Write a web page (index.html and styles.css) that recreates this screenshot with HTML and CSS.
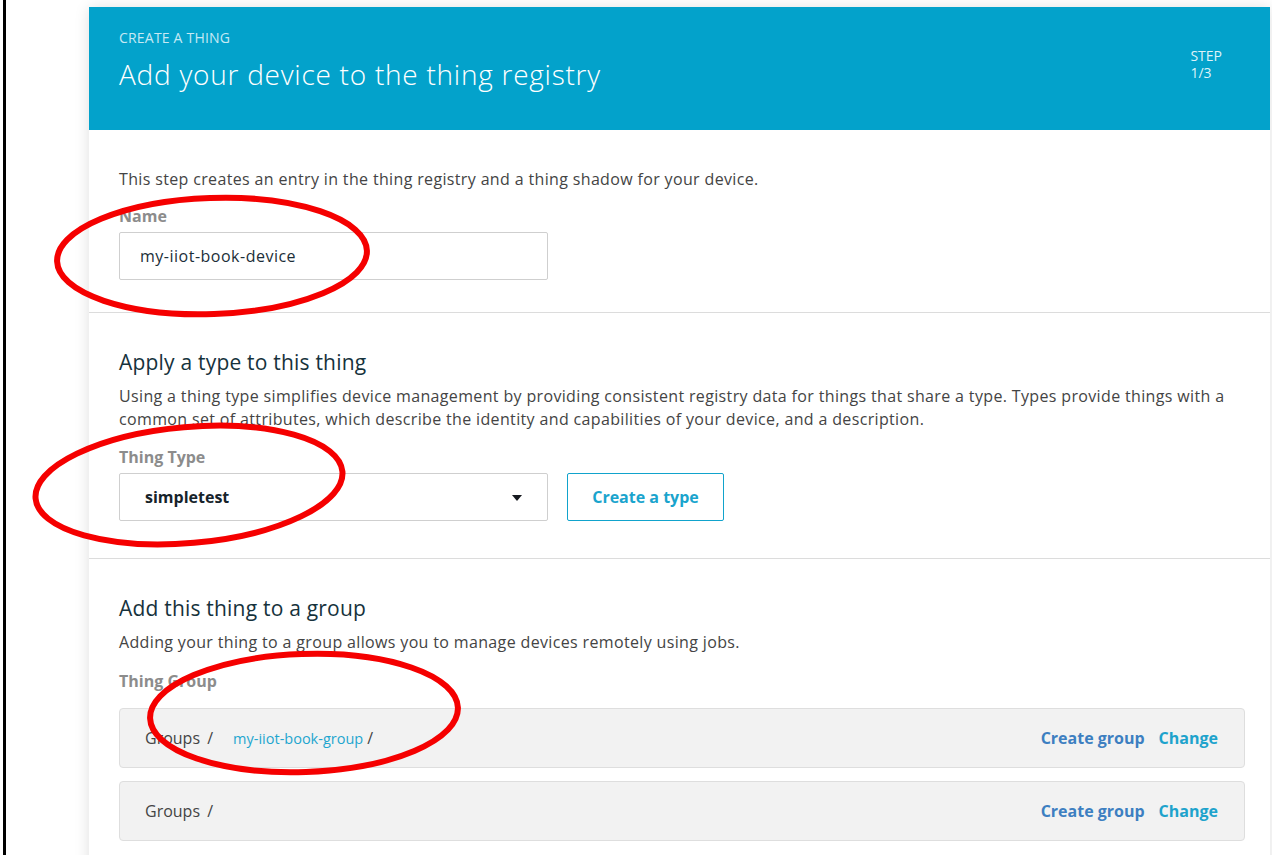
FILE: index.html
```html
<!DOCTYPE html>
<html>
<head>
<meta charset="utf-8">
<link rel="stylesheet" href="styles.css">
</head>
<body>
<div class="frame">
  <div class="card">
    <div class="hdr">
      <div class="hdr-main">
        <div class="eyebrow">CREATE A THING</div>
        <div class="title">Add your device to the thing registry</div>
      </div>
      <div class="step">STEP<br>1/3</div>
    </div>

    <div class="sec sec1">
      <p class="para">This step creates an entry in the thing registry and a thing shadow for your device.</p>
      <div class="label">Name</div>
      <div class="input">my-iiot-book-device</div>
    </div>

    <div class="sec sec2">
      <h2 class="h">Apply a type to this thing</h2>
      <p class="para">Using a thing type simplifies device management by providing consistent registry data for things that share a type. Types provide things with a common set of attributes, which describe the identity and capabilities of your device, and a description.</p>
      <div class="label">Thing Type</div>
      <div class="typerow">
        <div class="select">
          <span>simpletest</span>
          <svg class="caret" width="10" height="6" viewBox="0 0 10 6"><path d="M0 0 L10 0 L5 6 Z" fill="#16191f"/></svg>
        </div>
        <div class="btn">Create a type</div>
      </div>
    </div>

    <div class="sec sec3">
      <h2 class="h">Add this thing to a group</h2>
      <p class="para">Adding your thing to a group allows you to manage devices remotely using jobs.</p>
      <div class="label">Thing Group</div>
      <div class="grow">
        <div class="crumbs">Groups <span class="sl">/</span><a class="glink">my-iiot-book-group</a><span class="sl2">/</span></div>
        <div class="acts"><span class="cg">Create group</span><span class="ch">Change</span></div>
      </div>
      <div class="grow">
        <div class="crumbs">Groups <span class="sl">/</span></div>
        <div class="acts"><span class="cg">Create group</span><span class="ch">Change</span></div>
      </div>
    </div>
  </div>

  <svg class="marks" width="1272" height="855" viewBox="0 0 1272 855">
    <ellipse cx="212" cy="256" rx="155" ry="58" transform="rotate(-2 212 256)" fill="none" stroke="#f50000" stroke-width="6"/>
    <ellipse cx="189" cy="485" rx="154" ry="58" transform="rotate(-5 189 485)" fill="none" stroke="#f50000" stroke-width="6"/>
    <ellipse cx="304" cy="713" rx="154" ry="59" transform="rotate(-2 304 713)" fill="none" stroke="#f50000" stroke-width="6"/>
  </svg>
</div>
</body>
</html>
```

FILE: styles.css
```css
html, body {
  margin: 0;
  padding: 0;
  background: #fff;
  overflow: hidden;
}
body {
  font-family: "Open Sans", "Noto Sans", Arial, sans-serif;
  color: #444;
}
.frame {
  position: relative;
  margin-left: 3px;
  border-left: 3px solid #000;
  height: 855px;
  padding: 7px 2px 0 83px;
  box-sizing: border-box;
  overflow: hidden;
}
.card {
  background: #fff;
  box-shadow: 0 1px 14px rgba(0, 0, 0, 0.13);
  height: 900px;
}
.hdr {
  background: #03a2cb;
  height: 123px;
  box-sizing: border-box;
  padding: 22px 48px 0 30px;
  display: flex;
  justify-content: space-between;
}
.eyebrow {
  font-size: 14px;
  line-height: 18px;
  letter-spacing: 0.2px;
  color: #c6e9f4;
}
.title {
  margin-top: 9px;
  font-size: 28px;
  line-height: 36px;
  font-weight: 300;
  letter-spacing: 0.75px;
  color: #fff;
}
.step {
  margin-top: 18px;
  font-size: 14px;
  line-height: 17px;
  color: #dff3f9;
}
.sec {
  padding: 0 25px 0 30px;
  border-bottom: 1px solid #dcdcdc;
}
.sec1 { padding-top: 38px; padding-bottom: 32px; }
.sec2 { padding-top: 35px; padding-bottom: 37px; }
.sec3 { padding-top: 35px; border-bottom: none; }
.para {
  margin: 0;
  font-size: 16px;
  line-height: 23px;
  letter-spacing: 0.35px;
  color: #444;
}
.h {
  margin: 0;
  font-size: 21px;
  line-height: 28px;
  font-weight: 400;
  letter-spacing: 0.2px;
  color: #16323c;
}
.h + .para { margin-top: 9px; }
.label {
  font-size: 16px;
  line-height: 20px;
  font-weight: 700;
  color: #8c8c8c;
  margin-top: 15px;
  margin-bottom: 6px;
}
.sec2 .label { margin-top: 16px; }
.sec3 .label { margin-top: 17px; margin-bottom: 17px; }
.input {
  width: 429px;
  height: 48px;
  box-sizing: border-box;
  border: 1px solid #cfcfcf;
  border-radius: 2px;
  padding: 0 20px;
  font-size: 16px;
  line-height: 46px;
  letter-spacing: 0.5px;
  color: #1b2e38;
}
.typerow {
  display: flex;
  gap: 19px;
}
.select {
  width: 429px;
  height: 48px;
  box-sizing: border-box;
  border: 1px solid #cfcfcf;
  border-radius: 2px;
  padding: 0 25px 0 25px;
  display: flex;
  align-items: center;
  justify-content: space-between;
  font-size: 16px;
  font-weight: 700;
  color: #16232b;
}
.caret { margin-top: 1px; }
.btn {
  width: 157px;
  height: 48px;
  box-sizing: border-box;
  border: 1.5px solid #11a3cc;
  border-radius: 2px;
  display: flex;
  align-items: center;
  justify-content: center;
  font-size: 16px;
  font-weight: 700;
  color: #1aa4cd;
}
.grow {
  height: 60px;
  box-sizing: border-box;
  background: #f2f2f2;
  border: 1px solid #dedede;
  border-radius: 4px;
  display: flex;
  align-items: center;
  justify-content: space-between;
  padding: 0 26px 0 25px;
  margin-bottom: 13px;
}
.crumbs {
  font-size: 16px;
  color: #444;
}
.sl { margin-left: 3px; margin-right: 20px; }
.glink {
  font-size: 14.5px;
  color: #1fa6cf;
}
.sl2 { margin-left: 4px; }
.acts {
  display: flex;
  gap: 14px;
  font-size: 16px;
  font-weight: 700;
}
.cg { color: #3d7fc1; }
.ch { color: #1ea3cc; }
.marks {
  position: absolute;
  left: -6px;
  top: 0;
  pointer-events: none;
}
```
